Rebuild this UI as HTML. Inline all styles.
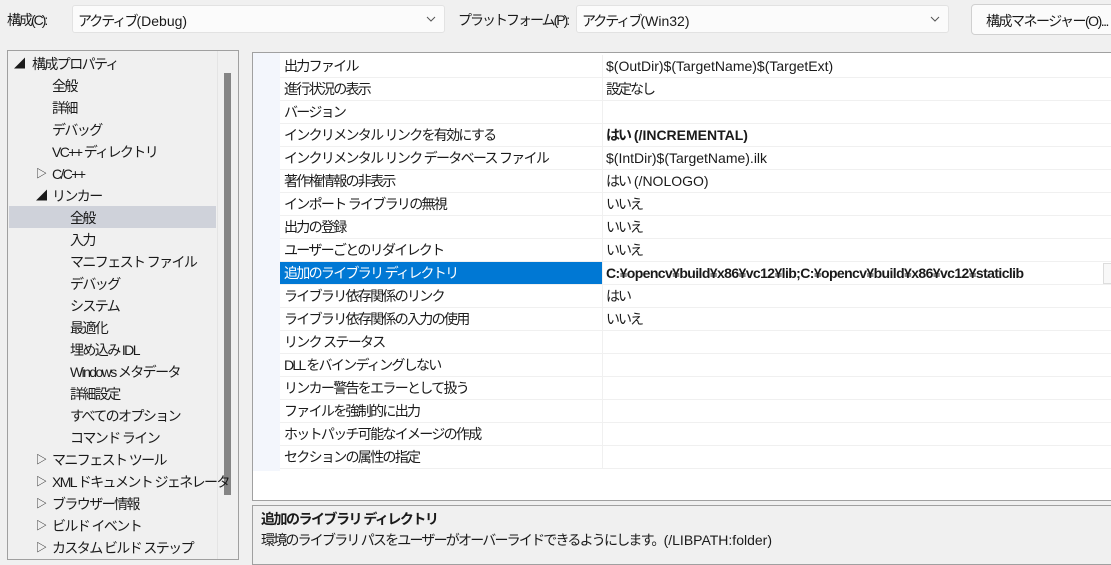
<!DOCTYPE html>
<html><head><meta charset="utf-8"><style>
*{margin:0;padding:0;box-sizing:border-box}
body{width:1111px;height:553px;background:#f0f0f0;font-family:"Liberation Sans","Noto Sans CJK JP",sans-serif;font-size:14px;color:#1a1a1a;position:relative;overflow:hidden}
.a{position:absolute;white-space:nowrap}
.j{letter-spacing:-2px}
.combo{position:absolute;top:5px;height:28px;background:#fbfbfb;border:1px solid #e2e2e2;border-radius:3px;padding:5px 0 0 5px;white-space:nowrap}
.combo svg{position:absolute;right:8px;top:10px}
.btn{position:absolute;left:971px;top:4px;width:150px;height:31px;background:#fbfbfb;border:1px solid #d0d0d0;border-radius:4px;padding:6px 0 0 14px;white-space:nowrap;letter-spacing:-1.5px}
#tree{position:absolute;left:7px;top:50px;width:232px;height:510px;border:1px solid #a0a0a0;background:#f0f0f0;overflow:hidden}
#tree .it{position:absolute;height:22px;line-height:22px;white-space:nowrap;letter-spacing:-1.6px}
.tri{position:absolute;font-size:11px;letter-spacing:0}
#grid{position:absolute;left:252px;top:52px;width:870px;height:449px;border:1px solid #a0a0a0;background:#fff;overflow:hidden}
.gut{position:absolute;left:0;top:0;width:27px;height:418px;background:#f3f6fc}
.row{position:absolute;left:27px;width:850px;height:23px;line-height:22px;border-bottom:1px solid #f0f0f0}
.row .n{position:absolute;left:4px;letter-spacing:-1.7px}
.row .v{position:absolute;left:322px;width:600px;height:23px;padding-left:3px;background:#fff;border-left:1px solid #f0f0f0;border-bottom:1px solid #f0f0f0}
.sel .n{color:#fff}
.sel{background:#0078d4}
#desc{position:absolute;left:252px;top:505px;width:870px;height:60px;border:1px solid #a0a0a0;background:#f0f0f0;padding:3px 0 0 8px;line-height:21px;white-space:nowrap}
</style></head><body>
<div class="a j" style="left:7px;top:10px">構成(C):</div>
<div class="combo" style="left:72px;width:373px"><span class="j">アクティブ</span>(Debug)<svg width="10" height="6"><path d="M1 1l4 4 4-4" stroke="#555" fill="none"/></svg></div>
<div class="a j" style="left:458px;top:10px">プラットフォーム(P):</div>
<div class="combo" style="left:576px;width:373px"><span class="j">アクティブ</span>(Win32)<svg width="10" height="6"><path d="M1 1l4 4 4-4" stroke="#555" fill="none"/></svg></div>
<div class="btn">構成マネージャー(O)...</div>

<div id="tree">
<div style="position:absolute;left:209px;top:0;width:1px;height:510px;background:#e4e4e4"></div>
<div style="position:absolute;left:216px;top:22px;width:7px;height:422px;background:#858585"></div>
<div style="position:absolute;left:1px;top:155px;width:207px;height:22px;background:#cfd2da"></div>
<div class="it" style="left:6px;top:2px"><span class="tri" style="left:0;top:0">◢</span><span style="margin-left:18px">構成プロパティ</span></div>
<div class="it" style="left:44px;top:24px">全般</div>
<div class="it" style="left:44px;top:46px">詳細</div>
<div class="it" style="left:44px;top:68px">デバッグ</div>
<div class="it" style="left:44px;top:90px">VC++ ディレクトリ</div>
<div class="it" style="left:28px;top:112px"><span class="tri">▷</span><span style="margin-left:16px">C/C++</span></div>
<div class="it" style="left:28px;top:134px"><span class="tri">◢</span><span style="margin-left:16px">リンカー</span></div>
<div class="it" style="left:62px;top:156px">全般</div>
<div class="it" style="left:62px;top:178px">入力</div>
<div class="it" style="left:62px;top:200px">マニフェスト ファイル</div>
<div class="it" style="left:62px;top:222px">デバッグ</div>
<div class="it" style="left:62px;top:244px">システム</div>
<div class="it" style="left:62px;top:266px">最適化</div>
<div class="it" style="left:62px;top:288px">埋め込み IDL</div>
<div class="it" style="left:62px;top:310px">Windows メタデータ</div>
<div class="it" style="left:62px;top:332px">詳細設定</div>
<div class="it" style="left:62px;top:354px">すべてのオプション</div>
<div class="it" style="left:62px;top:376px">コマンド ライン</div>
<div class="it" style="left:28px;top:398px"><span class="tri">▷</span><span style="margin-left:16px">マニフェスト ツール</span></div>
<div class="it" style="left:28px;top:420px"><span class="tri">▷</span><span style="margin-left:16px">XML ドキュメント ジェネレータ</span></div>
<div class="it" style="left:28px;top:442px"><span class="tri">▷</span><span style="margin-left:16px">ブラウザー情報</span></div>
<div class="it" style="left:28px;top:464px"><span class="tri">▷</span><span style="margin-left:16px">ビルド イベント</span></div>
<div class="it" style="left:28px;top:486px"><span class="tri">▷</span><span style="margin-left:16px">カスタム ビルド ステップ</span></div>
</div>

<div id="grid">
<div class="gut"></div>
<div class="row" style="top:2px"><span class="n">出力ファイル</span><span class="v">$(OutDir)$(TargetName)$(TargetExt)</span></div>
<div class="row" style="top:25px"><span class="n">進行状況の表示</span><span class="v j">設定なし</span></div>
<div class="row" style="top:48px"><span class="n">バージョン</span><span class="v"></span></div>
<div class="row" style="top:71px"><span class="n">インクリメンタル リンクを有効にする</span><span class="v" style="font-weight:bold"><span class="j">はい</span> (/INCREMENTAL)</span></div>
<div class="row" style="top:94px"><span class="n">インクリメンタル リンク データベース ファイル</span><span class="v">$(IntDir)$(TargetName).ilk</span></div>
<div class="row" style="top:117px"><span class="n">著作権情報の非表示</span><span class="v"><span class="j">はい</span> (/NOLOGO)</span></div>
<div class="row" style="top:140px"><span class="n">インポート ライブラリの無視</span><span class="v j">いいえ</span></div>
<div class="row" style="top:163px"><span class="n">出力の登録</span><span class="v j">いいえ</span></div>
<div class="row" style="top:186px"><span class="n">ユーザーごとのリダイレクト</span><span class="v j">いいえ</span></div>
<div class="row sel" style="top:209px"><span class="n">追加のライブラリ ディレクトリ</span><span class="v" style="font-weight:bold;letter-spacing:-0.6px">C:¥opencv¥build¥x86¥vc12¥lib;C:¥opencv¥build¥x86¥vc12¥staticlib</span></div>
<div class="row" style="top:232px"><span class="n">ライブラリ依存関係のリンク</span><span class="v j">はい</span></div>
<div class="row" style="top:255px"><span class="n">ライブラリ依存関係の入力の使用</span><span class="v j">いいえ</span></div>
<div class="row" style="top:278px"><span class="n">リンク ステータス</span><span class="v"></span></div>
<div class="row" style="top:301px"><span class="n">DLL をバインディングしない</span><span class="v"></span></div>
<div class="row" style="top:324px"><span class="n">リンカー警告をエラーとして扱う</span><span class="v"></span></div>
<div class="row" style="top:347px"><span class="n">ファイルを強制的に出力</span><span class="v"></span></div>
<div class="row" style="top:370px"><span class="n">ホットパッチ可能なイメージの作成</span><span class="v"></span></div>
<div class="row" style="top:393px"><span class="n">セクションの属性の指定</span><span class="v"></span></div>
<div style="position:absolute;left:850px;top:210px;width:12px;height:21px;background:#f8f8f8;border:1px solid #ddd"></div>
</div>

<div id="desc"><b class="j" style="letter-spacing:-1.5px">追加のライブラリ ディレクトリ</b><br><span style="letter-spacing:-1.8px">環境のライブラリ パスをユーザーがオーバーライドできるようにします。</span>(/LIBPATH:folder)</div>
</body></html>
